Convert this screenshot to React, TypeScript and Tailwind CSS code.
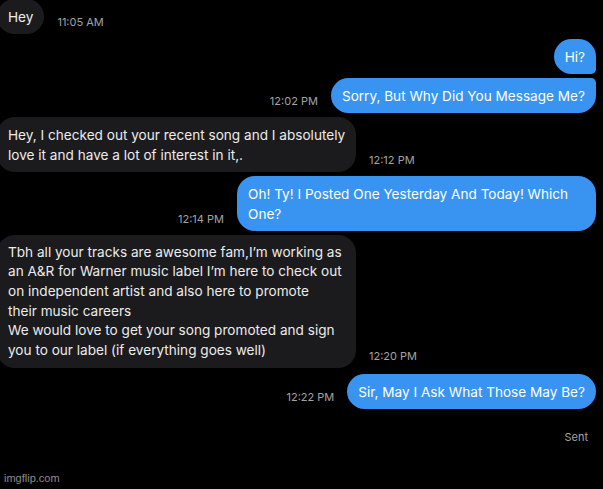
import React from 'react'

const Time = ({ children }: { children: React.ReactNode }) => (
  <span className="mb-[5px] shrink-0 text-[11px] leading-[14px] text-[#a3a3a3]">{children}</span>
)

function Incoming({ children, time, className = '' }: { children: React.ReactNode; time: string; className?: string }) {
  return (
    <div className={`flex items-end gap-[13px] ${className}`}>
      <div className="-ml-[3px] rounded-[18px] bg-[#1b1b1d] py-[7.5px] pl-[11px] pr-[11px] text-[13.6px] leading-[20px] text-[#ececec] whitespace-nowrap">
        {children}
      </div>
      <Time>{time}</Time>
    </div>
  )
}

function Outgoing({
  children,
  time,
  className = '',
  bubbleClass = '',
}: {
  children: React.ReactNode
  time?: string
  className?: string
  bubbleClass?: string
}) {
  return (
    <div className={`flex items-end justify-end gap-[13px] pr-[7px] ${className}`}>
      {time && <Time>{time}</Time>}
      <div
        className={`rounded-[18px] bg-[#3894f0] py-[7.5px] pl-[11px] pr-[11px] text-[13.6px] leading-[20px] text-white whitespace-nowrap ${bubbleClass}`}
      >
        {children}
      </div>
    </div>
  )
}

export default function App() {
  return (
    <div className="relative h-[489px] w-[603px] overflow-hidden bg-black font-['Inter','Noto_Sans',sans-serif]">
      <div className="-mt-[1px] flex flex-col">
        <Incoming time="11:05 AM">Hey</Incoming>

        <Outgoing className="mt-[5px]" bubbleClass="rounded-br-[5px]">
          Hi?
        </Outgoing>
        <Outgoing time="12:02 PM" className="mt-[4px]" bubbleClass="rounded-tr-[5px]">
          Sorry, But Why Did You Message Me?
        </Outgoing>

        <Incoming time="12:12 PM" className="mt-[4px]">
          <div className="w-[337px]">
            Hey, I checked out your recent song and I absolutely
            <br />
            love it and have a lot of interest in it,.
          </div>
        </Incoming>

        <Outgoing time="12:14 PM" className="mt-[4px]">
          <div className="w-[337px]">
            Oh! Ty! I Posted One Yesterday And Today! Which
            <br />
            One?
          </div>
        </Outgoing>

        <Incoming time="12:20 PM" className="mt-[4px]">
          <div className="w-[337px] leading-[19.7px]">
            Tbh all your tracks are awesome fam,I&rsquo;m working as
            <br />
            an A&amp;R for Warner music label I&rsquo;m here to check out
            <br />
            on independent artist and also here to promote
            <br />
            their music careers
            <br />
            We would love to get your song promoted and sign
            <br />
            you to our label (if everything goes well)
          </div>
        </Incoming>

        <Outgoing time="12:22 PM" className="mt-[6px]">
          Sir, May I Ask What Those May Be?
        </Outgoing>

        <div className="mt-[21px] pr-[15px] text-right text-[11px] leading-[14px] text-[#a3a3a3]">Sent</div>
      </div>

      <span className="absolute bottom-[3px] left-[4px] font-['Liberation_Sans',Arial,sans-serif] text-[11px] text-[#8c8c8c]">
        imgflip.com
      </span>
    </div>
  )
}
